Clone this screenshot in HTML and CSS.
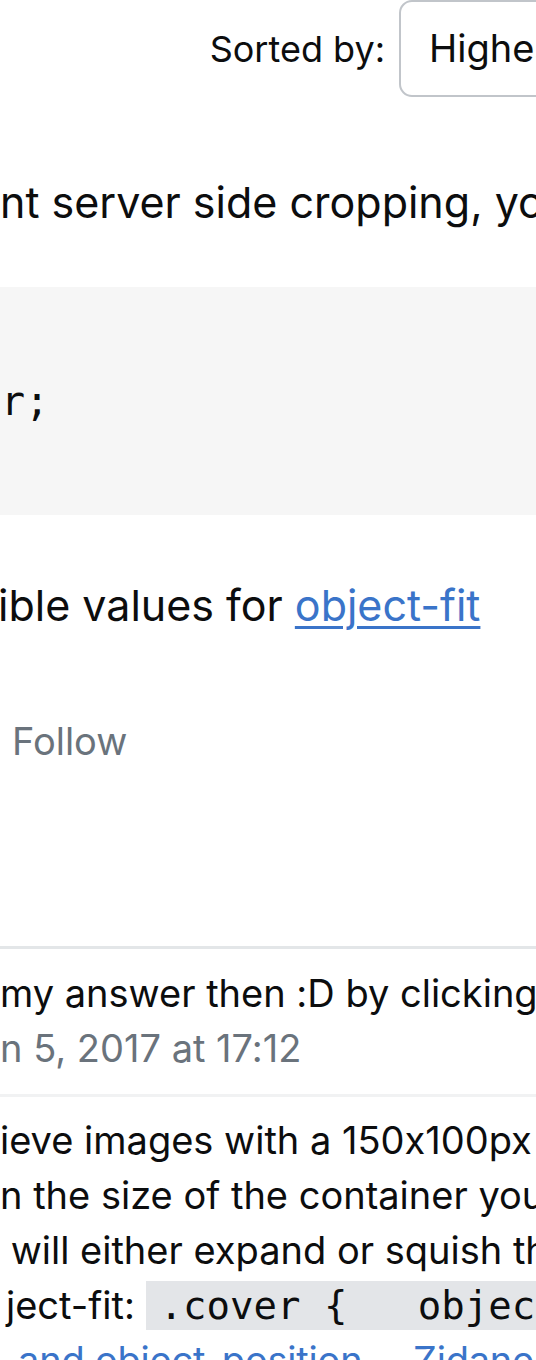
FILE: index.html
```html
<!DOCTYPE html>
<html lang="en">
<head>
<meta charset="utf-8">
<title>Answer</title>
<link rel="stylesheet" href="styles.css">
</head>
<body>
<div class="page">
  <div class="sortbar">
    <span class="sort-label">Sorted by:</span>
    <div class="sort-select">Highest score (default)</div>
  </div>

  <div class="answer">
    <p class="body-line line-a">nt server side cropping, you can use</p>
    <pre class="codeblock"><code class="code"><span class="code-line">img {</span><span class="code-line">    object-fit: cover;</span><span class="code-line">}</span></code></pre>
    <p class="body-line line-b">ible values for <a class="link" href="#">object-fit</a></p>
    <div class="post-menu"><span class="menu-item">Follow</span></div>
  </div>

  <div class="comments">
    <div class="rule rule-strong"></div>
    <div class="comment comment-first">
      <div class="c-line c-1">my answer then :D by clicking the tick</div>
      <div class="c-line c-date">n 5, 2017 at 17:12</div>
    </div>
    <div class="rule rule-light"></div>
    <div class="comment comment-second">
      <div class="c-line c-2">ieve images with a 150x100px size</div>
      <div class="c-line c-3">n the size of the container you</div>
      <div class="c-line c-4"> will either expand or squish them</div>
      <div class="c-line c-5">ject-fit: <code class="inline-code">.cover {   object-fit: cover; }</code></div>
      <div class="c-line c-6"><a class="link plain" href="#">and object-position</a>. – <a class="link plain" href="#">Zidane</a></div>
    </div>
  </div>
</div>
</body>
</html>
```

FILE: styles.css
```css
html, body {
  margin: 0;
  padding: 0;
  background: #ffffff;
}

body {
  font-family: Inter, "Noto Sans", "Liberation Sans", sans-serif;
  font-feature-settings: "calt" 0;
  color: #0c0d0e;
}

.page {
  width: 536px;
  height: 1360px;
  overflow: hidden;
}

/* sort bar */
.sortbar {
  display: flex;
  align-items: flex-start;
  height: 98px;
  padding-left: 197px;
  gap: 14px;
  white-space: nowrap;
}

.sort-label {
  width: 188px;
  flex-shrink: 0;
  text-align: right;
  font-size: 36px;
  line-height: 98px;
}

.sort-select {
  flex-shrink: 0;
  box-sizing: border-box;
  height: 97px;
  border: 2px solid #c1c5ca;
  border-radius: 13px;
  padding: 0 28px;
  font-size: 38px;
  line-height: 93px;
}

/* answer body */
.body-line {
  margin: 0;
  font-size: 43px;
  line-height: 64px;
  white-space: nowrap;
}

.line-a {
  margin-top: 72px;
}

.line-b {
  margin-top: 58px;
  margin-left: -2px;
}

.link {
  color: #3a74c9;
  text-decoration: underline;
  text-decoration-thickness: 3px;
  text-underline-offset: 5px;
}

.link.plain {
  text-decoration: none;
}

.codeblock {
  margin: 53px 0 0;
  height: 228px;
  box-sizing: border-box;
  padding: 33px 0;
  background: #f6f6f6;
  overflow: hidden;
  font-family: "DejaVu Sans Mono", "Liberation Mono", monospace;
  font-size: 40px;
  line-height: 54px;
  color: #0c0d0e;
}

.code {
  display: block;
  font-family: inherit;
  margin-left: calc(1px - 20ch);
}

.code-line {
  display: block;
  white-space: pre;
}

.post-menu {
  margin-top: 76px;
  padding-left: 12px;
  font-size: 38px;
  line-height: 56px;
  color: #6a737c;
}

/* comments */
.comments {
  margin-top: 177px;
}

.rule {
  height: 3px;
}

.rule-strong {
  background: #e3e6e8;
}

.rule-light {
  background: #f1f2f3;
  margin-top: 18px;
}

.comment {
  font-size: 38px;
  line-height: 55px;
}

.comment-first {
  padding-top: 17px;
}

.comment-second {
  padding-top: 16px;
}

.c-line {
  white-space: pre;
}

.c-date {
  color: #6a737c;
}

.c-5 {
  padding-left: 6px;
}

.c-6 {
  padding-left: 18px;
  letter-spacing: -0.2px;
}

.inline-code {
  font-family: "DejaVu Sans Mono", "Liberation Mono", monospace;
  font-size: 39px;
  background: #e3e5e8;
  padding: 2px 14px;
  white-space: pre;
}
```
